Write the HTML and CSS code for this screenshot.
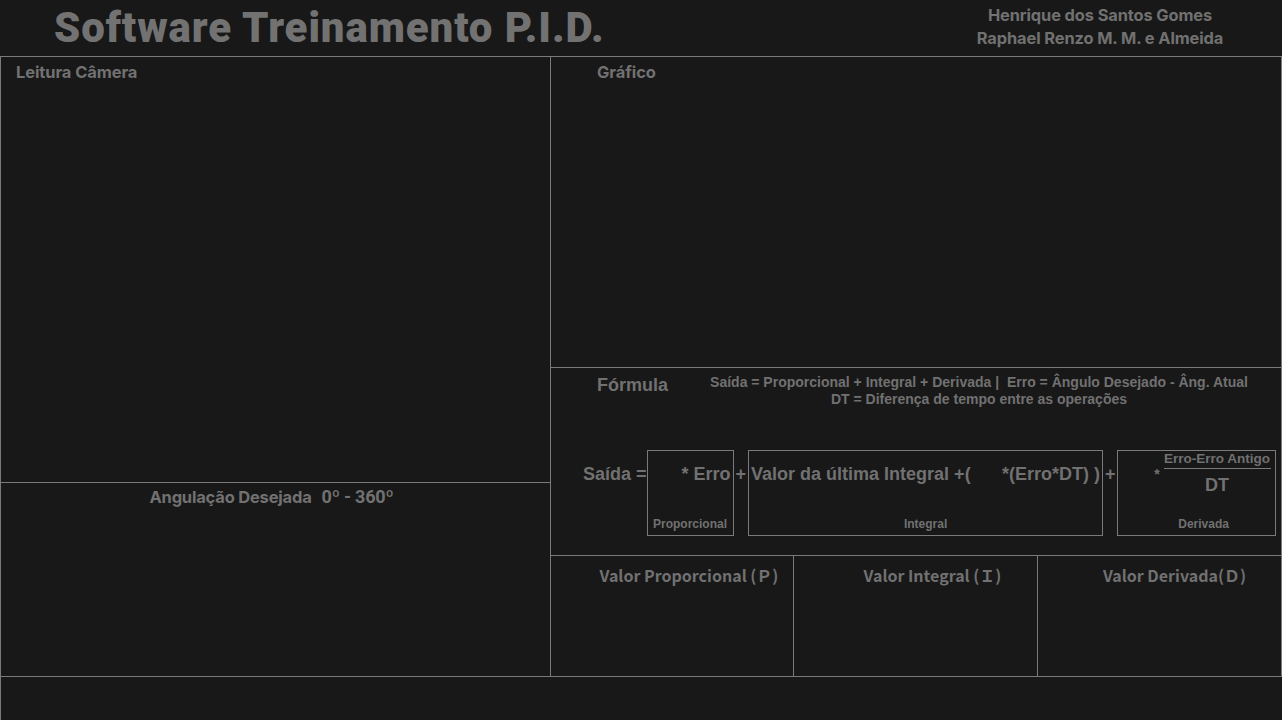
FILE: index.html
```html
<!DOCTYPE html>
<html lang="pt-BR">
<head>
<meta charset="utf-8">
<title>Software Treinamento P.I.D.</title>
<link rel="stylesheet" href="styles.css">
</head>
<body>
<div class="app">
  <header class="top">
    <h1 class="title">Software Treinamento P.I.D.</h1>
    <div class="authors">
      <div>Henrique dos Santos Gomes</div>
      <div>Raphael Renzo M. M. e Almeida</div>
    </div>
  </header>

  <main class="grid">
    <div class="col">
      <section class="panel cam">
        <h2 class="ptitle">Leitura Câmera</h2>
      </section>
      <section class="panel angle">
        <div class="angle-title">
          <span class="ang-label">Angulação Desejada</span>
          <span class="ang-range">0º - 360º</span>
        </div>
      </section>
    </div>

    <div class="col">
      <section class="panel graph">
        <h2 class="ptitle">Gráfico</h2>
      </section>

      <section class="panel formula">
        <div class="f-head">
          <h2 class="f-title">Fórmula</h2>
          <div class="f-desc">
            <div>Saída = Proporcional + Integral + Derivada |&nbsp; Erro = Ângulo Desejado - Âng. Atual</div>
            <div>DT = Diferença de tempo entre as operações</div>
          </div>
        </div>
        <div class="f-row">
          <span class="f-text f-saida">Saída =</span>
          <div class="f-box box-p">
            <div class="f-text box-main right">* Erro</div>
            <div class="f-label">Proporcional</div>
          </div>
          <span class="f-text f-plus">+</span>
          <div class="f-box box-i">
            <div class="f-text box-main split">
              <span>Valor da última Integral +(</span>
              <span>*(Erro*DT) )</span>
            </div>
            <div class="f-label">Integral</div>
          </div>
          <span class="f-text f-plus plus-2">+</span>
          <div class="f-box box-d">
            <div class="frac-wrap">
              <span class="frac-star">*</span>
              <div class="frac">
                <div class="num">Erro-Erro Antigo</div>
                <div class="den">DT</div>
              </div>
            </div>
            <div class="f-label d-label">Derivada</div>
          </div>
        </div>
      </section>

      <div class="values">
        <section class="panel val val-p"><h3 class="val-title">Valor Proporcional (Ｐ)</h3></section>
        <section class="panel val val-i"><h3 class="val-title">Valor Integral (Ｉ)</h3></section>
        <section class="panel val val-d"><h3 class="val-title">Valor Derivada(Ｄ)</h3></section>
      </div>
    </div>
  </main>

  <footer class="bottom"></footer>
</div>
</body>
</html>
```
FILE: styles.css
```css
html, body {
  margin: 0;
  padding: 0;
  background: #181818;
}

body {
  width: 1282px;
  height: 720px;
  overflow: hidden;
  color: #717171;
  font-family: "Liberation Sans", Arial, sans-serif;
}

.app {
  display: flex;
  flex-direction: column;
  width: 1282px;
  height: 720px;
}

/* ---------- header ---------- */
.top {
  display: flex;
  height: 56px;
  flex: none;
}

.title {
  margin: 0 0 0 54px;
  font-family: Roboto, sans-serif;
  font-weight: 900;
  font-size: 42px;
  line-height: 56px;
  letter-spacing: 0.9px;
  color: #727272;
}

.authors {
  margin-left: auto;
  margin-right: 52px;
  width: 260px;
  padding-top: 4px;
  text-align: center;
  font-family: Inter, sans-serif;
  font-weight: 700;
  font-size: 16.4px;
  line-height: 23px;
  letter-spacing: -0.1px;
}

/* ---------- main grid ---------- */
.grid {
  display: grid;
  grid-template-columns: 549px 730px;
  gap: 1px;
  padding: 1px;
  background: #7a7a7a;
  flex: none;
}

.col {
  display: flex;
  flex-direction: column;
  gap: 1px;
}

.panel {
  background: #181818;
  box-sizing: border-box;
}

.cam { height: 425px; padding: 5px 0 0 15px; }
.angle { height: 193px; padding-top: 4px; }
.graph { height: 310px; padding: 5px 0 0 46px; }
.formula { height: 187px; }

.ptitle {
  margin: 0;
  font-family: Inter, sans-serif;
  font-weight: 700;
  font-size: 16.5px;
  line-height: 20px;
  letter-spacing: -0.1px;
}

/* ---------- angle ---------- */
.angle-title {
  display: flex;
  justify-content: center;
  align-items: baseline;
  gap: 10px;
  line-height: 20px;
  padding-right: 8px;
}

.ang-label {
  font-family: Inter, sans-serif;
  font-weight: 700;
  font-size: 16.5px;
  letter-spacing: -0.2px;
}

.ang-range {
  font-family: Roboto, sans-serif;
  font-weight: 700;
  font-size: 18px;
  letter-spacing: -0.2px;
}

/* ---------- formula ---------- */
.f-head {
  display: flex;
  height: 82px;
  box-sizing: border-box;
  padding: 5px 0 0 46px;
}

.f-title {
  margin: 0;
  font-family: "Liberation Sans", Arial, sans-serif;
  font-weight: 700;
  font-size: 18px;
  line-height: 22px;
  width: 113px;
  padding-top: 1px;
}

.f-desc {
  width: 538px;
  text-align: center;
  font-family: "Liberation Sans Narrow", "Arial Narrow", "Liberation Sans", sans-serif;
  font-weight: 700;
  font-size: 14px;
  line-height: 17px;
  white-space: nowrap;
  padding-top: 1px;
}

.f-row {
  display: flex;
  align-items: flex-start;
  padding-left: 32px;
}

.f-text {
  font-family: "Liberation Sans", Arial, sans-serif;
  font-weight: 700;
  font-size: 18px;
  line-height: 22px;
  white-space: pre;
}

.f-saida, .f-plus {
  padding-top: 13px;
}

.f-plus {
  margin: 0 2px;
}

.plus-2 {
  margin-right: 1px;
}

.f-box {
  box-sizing: border-box;
  height: 86px;
  border: 1px solid #7a7a7a;
  display: flex;
  flex-direction: column;
  justify-content: space-between;
  padding: 12px 2px 4px;
}

.box-p { width: 87px; }
.box-i { width: 355px; }
.box-d { width: 159px; padding: 0 4px 4px 2px; }

.right { text-align: right; }

.split {
  display: flex;
  justify-content: space-between;
}

.f-label {
  text-align: center;
  font-family: "Liberation Sans", Arial, sans-serif;
  font-weight: 700;
  font-size: 12px;
  line-height: 14px;
}

.d-label { padding-left: 17px; }

.frac-wrap {
  display: flex;
  justify-content: flex-end;
  align-items: center;
  gap: 4px;
}

.frac-star {
  font-weight: 700;
  font-size: 14px;
  line-height: 14px;
}

.frac {
  display: flex;
  flex-direction: column;
  align-items: center;
  width: 107px;
  font-weight: 700;
}

.num {
  font-size: 13.5px;
  line-height: 15px;
  padding-bottom: 2px;
  border-bottom: 1px solid #7a7a7a;
  width: 100%;
  text-align: center;
  white-space: nowrap;
}

.den {
  font-size: 18px;
  line-height: 22px;
  margin-top: 5px;
}

/* ---------- values ---------- */
.values {
  display: grid;
  grid-template-columns: 242px 243px 243px;
  gap: 1px;
  height: 120px;
}

.val {
  padding: 8px 0 0 34px;
  text-align: center;
}

.val-d {
  padding-left: 30px;
}

.val-title {
  margin: 0;
  font-family: "Noto Sans CJK JP", "Noto Sans CJK SC", sans-serif;
  font-weight: 700;
  font-size: 16px;
  line-height: 22px;
  white-space: nowrap;
}

/* ---------- footer ---------- */
.bottom {
  flex: 1;
  border-left: 1px solid #7a7a7a;
}
```
